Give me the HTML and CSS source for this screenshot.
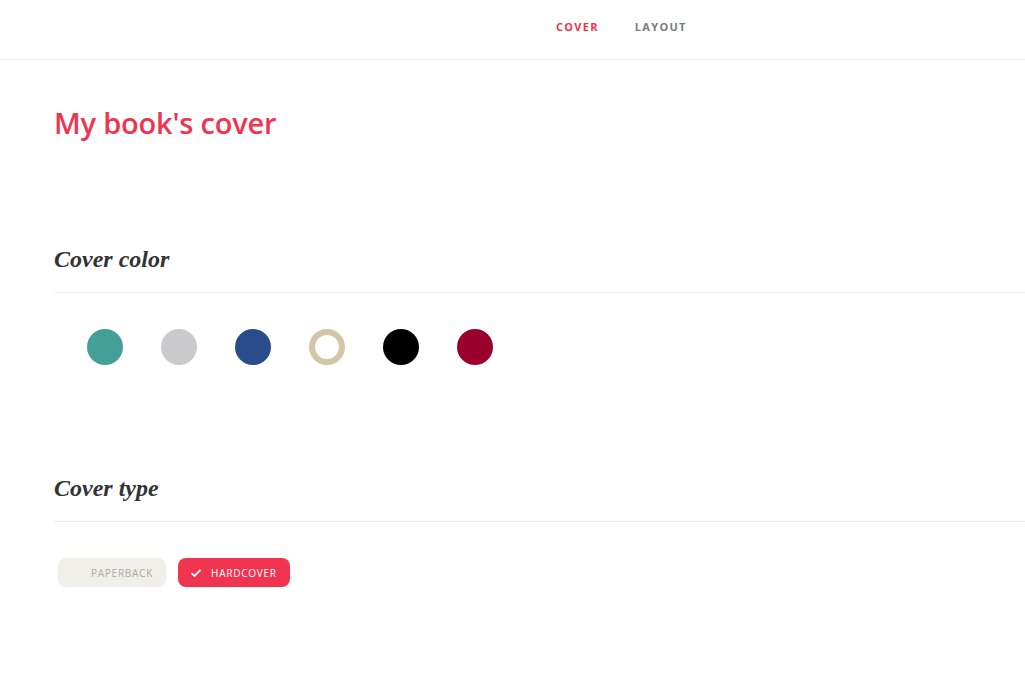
FILE: index.html
```html
<!DOCTYPE html>
<html>
<head>
<meta charset="utf-8">
<link rel="stylesheet" href="styles.css">
</head>
<body>
<header class="topbar">
  <nav class="nav">
    <a class="nav-link active">COVER</a>
    <a class="nav-link">LAYOUT</a>
  </nav>
</header>
<main class="content">
  <h1 class="title">My book's cover</h1>
  <section class="section section-color">
    <h2 class="heading">Cover color</h2>
    <div class="swatches">
      <span class="swatch teal"></span>
      <span class="swatch grey"></span>
      <span class="swatch blue"></span>
      <span class="swatch beige"></span>
      <span class="swatch black"></span>
      <span class="swatch crimson"></span>
    </div>
  </section>
  <section class="section section-type">
    <h2 class="heading">Cover type</h2>
    <div class="types">
      <button class="type-btn"><span class="check"></span>PAPERBACK</button>
      <button class="type-btn selected"><span class="check"><svg width="12" height="10" viewBox="0 0 12 10"><path d="M1.5 5.2 L4.5 8 L10.5 1.8" fill="none" stroke="#fff" stroke-width="1.8"/></svg></span>HARDCOVER</button>
    </div>
  </section>
</main>
</body>
</html>
```
FILE: styles.css
```css
* { box-sizing: border-box; }
html, body { margin: 0; padding: 0; background: #fff; }
body { font-family: "Open Sans", "DejaVu Sans", sans-serif; }
.topbar {
  height: 60px;
  border-bottom: 1px solid #ececec;
  display: flex;
  align-items: flex-start;
  padding-left: 556px;
  padding-top: 18px;
}
.nav { display: flex; gap: 36px; }
.nav-link {
  font-family: "Open Sans", sans-serif;
  font-size: 11px;
  line-height: 18px;
  font-weight: 700;
  letter-spacing: 1.3px;
  color: #7a7a7a;
}
.nav-link.active { color: #f0344f; }
.content { padding-left: 54px; }
.title {
  margin: 0;
  padding-top: 43px;
  font-family: "Open Sans", sans-serif;
  font-weight: 600;
  font-size: 29px;
  letter-spacing: -0.2px;
  color: #f0344f;
  line-height: 40px;
}
.section-color { padding-top: 100px; }
.section-type { padding-top: 107px; }
.heading {
  margin: 0;
  font-family: "Liberation Serif", "DejaVu Serif", serif;
  font-style: italic;
  font-weight: 700;
  font-size: 24px;
  color: #333;
  line-height: 32px;
  padding-bottom: 17px;
  border-bottom: 1px solid #eeeeea;
}
.swatches {
  display: flex;
  gap: 38px;
  padding: 36px 0 0 33px;
}
.swatch {
  width: 36px;
  height: 36px;
  border-radius: 50%;
  display: block;
}
.teal { background: #449f97; }
.grey { background: #cacacc; }
.blue { background: #284d8a; }
.beige { background: #fff; border: 6px solid #d4c5a9; }
.black { background: #000; }
.crimson { background: #9b002c; }
.types {
  display: flex;
  gap: 12px;
  padding: 36px 0 0 4px;
}
.type-btn {
  display: flex;
  align-items: center;
  height: 29px;
  border: none;
  border-radius: 8px;
  background: #f1efe9;
  color: #aaa;
  font-family: "Open Sans", sans-serif;
  font-size: 10px;
  letter-spacing: 0.75px;
  padding: 0 13px 0 12px;
}
.type-btn.selected { background: #f0344f; color: #fff; }
.check { width: 21px; display: flex; align-items: center; }
```
